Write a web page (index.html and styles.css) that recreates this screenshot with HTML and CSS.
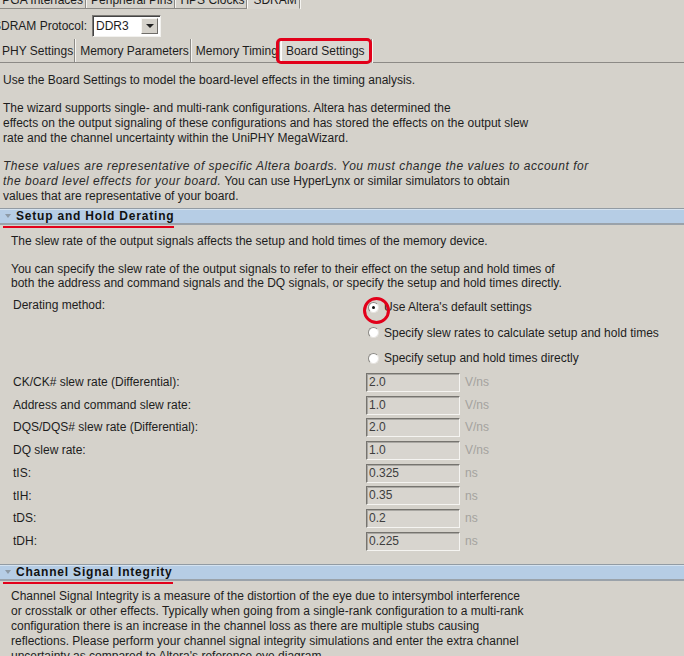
FILE: index.html
```html
<!DOCTYPE html>
<html lang="en">
<head>
  <meta charset="UTF-8" />
  <title>SDRAM - Board Settings</title>
  <link rel="stylesheet" href="styles.css">
</head>
<body>
  <div class="tabs tabs-top">
    <span class="tab">FPGA Interfaces</span>
    <span class="tab">Peripheral Pins</span>
    <span class="tab">HPS Clocks</span>
    <span class="tab active">SDRAM</span>
  </div>

  <div class="protocol">
    <span>SDRAM Protocol:</span>
    <div class="select">
      <span class="select-value">DDR3</span>
      <span class="select-btn"><i></i></span>
    </div>
  </div>

  <div class="tabs tabs-sub">
    <span class="tab first">PHY Settings</span>
    <span class="tab">Memory Parameters</span>
    <span class="tab">Memory Timing</span>
    <span class="tab active marked">Board Settings</span>
    <span class="tab-fill"></span>
  </div>

  <div class="intro">
    <p>Use the Board Settings to model the board-level effects in the timing analysis.</p>
    <p>The wizard supports single- and multi-rank configurations. Altera has determined the<br>
      effects on the output signaling of these configurations and has stored the effects on the output slew<br>
      rate and the channel uncertainty within the UniPHY MegaWizard.</p>
    <p><em>These values are representative of specific Altera boards. You must change the values to account for<br>
      the board level effects for your board.</em> You can use HyperLynx or similar simulators to obtain<br>
      values that are representative of your board.</p>
  </div>

  <section class="group">
    <h2 class="group-bar"><span class="group-title"><i class="twisty"></i>Setup and Hold Derating</span></h2>
    <div class="group-body">
      <p>The slew rate of the output signals affects the setup and hold times of the memory device.</p>
      <p>You can specify the slew rate of the output signals to refer to their effect on the setup and hold times of<br>
        both the address and command signals and the DQ signals, or specify the setup and hold times directly.</p>

      <div class="derating">
        <span class="derating-label">Derating method:</span>
        <div class="radios">
          <label class="radio-row"><span class="radio checked marked"></span>Use Altera's default settings</label>
          <label class="radio-row"><span class="radio"></span>Specify slew rates to calculate setup and hold times</label>
          <label class="radio-row"><span class="radio"></span>Specify setup and hold times directly</label>
        </div>
      </div>

      <div class="fields">
        <span>CK/CK# slew rate (Differential):</span><span class="field">2.0</span><span class="unit">V/ns</span>
        <span>Address and command slew rate:</span><span class="field">1.0</span><span class="unit">V/ns</span>
        <span>DQS/DQS# slew rate (Differential):</span><span class="field">2.0</span><span class="unit">V/ns</span>
        <span>DQ slew rate:</span><span class="field">1.0</span><span class="unit">V/ns</span>
        <span>tIS:</span><span class="field">0.325</span><span class="unit">ns</span>
        <span>tIH:</span><span class="field">0.35</span><span class="unit">ns</span>
        <span>tDS:</span><span class="field">0.2</span><span class="unit">ns</span>
        <span>tDH:</span><span class="field">0.225</span><span class="unit">ns</span>
      </div>
    </div>
  </section>

  <section class="group">
    <h2 class="group-bar"><span class="group-title"><i class="twisty"></i>Channel Signal Integrity</span></h2>
    <div class="group-body channel">
      <p>Channel Signal Integrity is a measure of the distortion of the eye due to intersymbol interference<br>
        or crosstalk or other effects. Typically when going from a single-rank configuration to a multi-rank<br>
        configuration there is an increase in the channel loss as there are multiple stubs causing<br>
        reflections. Please perform your channel signal integrity simulations and enter the extra channel<br>
        uncertainty as compared to Altera's reference eye diagram.</p>
    </div>
  </section>
</body>
</html>
```

FILE: styles.css
```css
* { box-sizing: border-box; }

body {
  margin: 0;
  width: 684px;
  height: 656px;
  overflow: hidden;
  background: #d5d2cb;
  font-family: 'Liberation Sans', Arial, sans-serif;
  font-size: 12px;
  color: #1d1d1d;
}

p { margin: 0; }

/* Tab strips */
.tabs {
  display: flex;
  align-items: stretch;
  white-space: nowrap;
}

.tab {
  display: flex;
  align-items: center;
  padding: 0 1px 0 5px;
  border-right: 1px solid #8c8a86;
  box-shadow: 1px 0 0 #f5f4f1;
  border-bottom: 1px solid #8c8a86;
}

.tab.active {
  border-bottom-color: transparent;
  background: #dad7d1;
  border-left: 1px solid #fbfbfa;
}

.tab-fill {
  flex: 1;
  border-bottom: 1px solid #8c8a86;
}

.tabs-top {
  height: 18px;
  margin: -9px 0 0 -10px;
}

.tabs-top .tab { padding: 0 2px 0 5px; }

.tabs-sub {
  height: 24px;
  margin: 2px 0 0 0;
}

.tabs-sub .tab.first { padding-left: 2px; }

.tabs-sub .tab.active {
  padding: 0 6px 0 4px;
  margin-left: 1px;
}

.marked { position: relative; }

.tab.marked::after {
  content: '';
  position: absolute;
  left: -6px;
  right: -1px;
  top: -1px;
  bottom: -2px;
  border: 3px solid #e2001a;
  border-radius: 5px;
}

/* Protocol selector */
.protocol {
  display: flex;
  align-items: center;
  gap: 5px;
  height: 22px;
  margin: 6px 0 0 -7px;
}

.select {
  display: flex;
  width: 69px;
  height: 22px;
  background: #fff;
  border: 1px solid;
  border-color: #7b7975 #f2f1ee #f2f1ee #7b7975;
  box-shadow: inset 1px 1px 0 #444;
  padding: 2px 2px 2px 3px;
}

.select-value {
  flex: 1;
  line-height: 16px;
}

.select-btn {
  width: 17px;
  background: #d5d2cb;
  border: 1px solid;
  border-color: #f7f6f3 #6f6d69 #6f6d69 #f7f6f3;
  display: flex;
  align-items: center;
  justify-content: center;
}

.select-btn i {
  border-left: 4px solid transparent;
  border-right: 4px solid transparent;
  border-top: 4px solid #222;
}

/* Intro text */
.intro {
  margin-top: 10px;
  padding-left: 3px;
  line-height: 15px;
}

.intro p { margin-bottom: 13px; }
.intro p:last-child { margin-bottom: 0; }

.intro em {
  color: #2a2a2a;
  letter-spacing: 0.5px;
}

/* Collapsible groups */
.group-bar {
  position: relative;
  margin: 4px 0 0;
  height: 17px;
  background: #b6cde5;
  border-top: 1px solid #929ba3;
  border-bottom: 2px solid #9aa2aa;
  box-shadow: inset 0 1px 0 #d4e2ef;
  font-size: 12px;
  font-weight: bold;
  line-height: 15px;
  letter-spacing: 0.8px;
  color: #111;
}

.group-title {
  position: relative;
  display: inline-block;
  padding-left: 16px;
}

.group-title::after {
  content: '';
  position: absolute;
  left: 3px;
  right: 0;
  bottom: -4px;
  height: 2px;
  background: #e2001a;
}

.twisty {
  position: absolute;
  left: 5px;
  top: 5px;
  border-left: 3px solid transparent;
  border-right: 3px solid transparent;
  border-top: 4px solid #8d9aa6;
}

.group-body {
  padding: 9px 0 0 11px;
  line-height: 14.5px;
}

.group-body p { margin-bottom: 13px; }

/* Derating method */
.derating {
  display: grid;
  grid-template-columns: 357px 1fr;
  margin-top: -9px;
}

.derating-label {
  padding: 3px 0 0 2px;
  line-height: 15px;
}

.radios {
  display: flex;
  flex-direction: column;
}

.radio-row {
  display: flex;
  align-items: center;
  height: 25.5px;
  gap: 5px;
}

.radio {
  position: relative;
  width: 11px;
  height: 11px;
  border-radius: 50%;
  background: #fff;
  border: 1px solid;
  border-color: #8b8985 #e6e4e0 #e6e4e0 #8b8985;
}

.radio.checked::before {
  content: '';
  position: absolute;
  left: 3px;
  top: 3px;
  width: 3px;
  height: 3px;
  border-radius: 50%;
  background: #111;
}

.radio.marked::after {
  content: '';
  position: absolute;
  left: -6px;
  top: -6px;
  width: 21px;
  height: 21px;
  border: 3px solid #e2001a;
  border-radius: 50%;
}

/* Value fields */
.fields {
  display: grid;
  grid-template-columns: 353px 94px 1fr;
  grid-auto-rows: 22.7px;
  align-items: center;
  padding-left: 2px;
}

.field {
  height: 19px;
  line-height: 17px;
  padding-left: 2px;
  color: #3e3e3e;
  background: #d8d5cf;
  border: 1px solid;
  border-color: #76746f #f5f4f1 #f5f4f1 #76746f;
  box-shadow: inset 1px 1px 0 #a9a7a2;
}

.unit {
  padding-left: 5px;
  color: #a4a29e;
}

.group + .group .group-bar { margin-top: 11px; }

.channel {
  padding-top: 8px;
  line-height: 15px;
}
```
